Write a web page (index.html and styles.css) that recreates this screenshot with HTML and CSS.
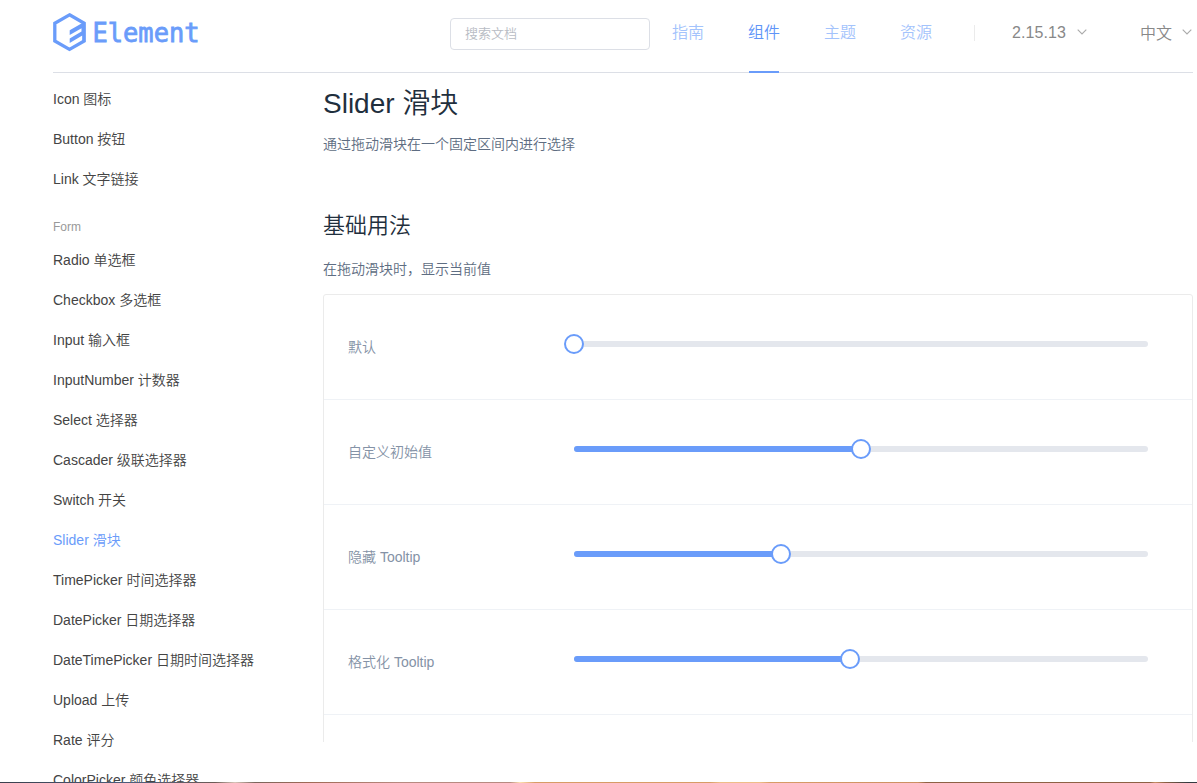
FILE: index.html
```html
<!DOCTYPE html>
<html lang="zh-CN">
<head>
<meta charset="utf-8">
<title>Element - Slider 滑块</title>
<link rel="stylesheet" href="styles.css">
</head>
<body>
<div class="page">
  <header class="header">
    <svg class="logo" width="150" height="40" viewBox="0 0 150 40">
      <path class="logo-hex" d="M16.5 2.8 31.2 11.2V29L16.5 37.4 1.8 29V11.2Z"/>
      <path class="logo-bars" d="M16.7 18.3 31.5 9.8V29L29.3 30.2V23.6L16.7 30.9V26.4L28.5 19.6V16.3L16.7 23.1Z"/>
      <text class="logo-text" x="39.5" y="29.8" textLength="107" lengthAdjust="spacingAndGlyphs">Element</text>
    </svg>
    <input class="search" type="text" placeholder="搜索文档">
    <nav class="nav">
      <a class="nav-item">指南</a>
      <a class="nav-item active">组件</a>
      <a class="nav-item">主题</a>
      <a class="nav-item">资源</a>
    </nav>
    <span class="divider"></span>
    <span class="version">2.15.13</span>
    <svg class="arrow" width="10" height="6" viewBox="0 0 10 6"><path d="M.7.7 5 5 9.3.7"/></svg>
    <span class="lang">中文</span>
    <svg class="arrow" width="10" height="6" viewBox="0 0 10 6"><path d="M.7.7 5 5 9.3.7"/></svg>
  </header>
  <div class="body">
    <aside class="sidebar">
      <a class="link">Icon 图标</a>
      <a class="link">Button 按钮</a>
      <a class="link">Link 文字链接</a>
      <div class="group">Form</div>
      <a class="link">Radio 单选框</a>
      <a class="link">Checkbox 多选框</a>
      <a class="link">Input 输入框</a>
      <a class="link">InputNumber 计数器</a>
      <a class="link">Select 选择器</a>
      <a class="link">Cascader 级联选择器</a>
      <a class="link">Switch 开关</a>
      <a class="link current">Slider 滑块</a>
      <a class="link">TimePicker 时间选择器</a>
      <a class="link">DatePicker 日期选择器</a>
      <a class="link">DateTimePicker 日期时间选择器</a>
      <a class="link">Upload 上传</a>
      <a class="link">Rate 评分</a>
      <a class="link">ColorPicker 颜色选择器</a>
    </aside>
    <main class="content">
      <h1>Slider 滑块</h1>
      <p>通过拖动滑块在一个固定区间内进行选择</p>
      <h2>基础用法</h2>
      <p>在拖动滑块时，显示当前值</p>
      <section class="demo">
        <div class="row"><span class="label">默认</span><div class="track"><div class="bar" style="width:0%"></div><i class="knob"></i></div></div>
        <div class="row"><span class="label">自定义初始值</span><div class="track"><div class="bar" style="width:50%"></div><i class="knob"></i></div></div>
        <div class="row"><span class="label">隐藏 Tooltip</span><div class="track"><div class="bar" style="width:36%"></div><i class="knob"></i></div></div>
        <div class="row"><span class="label">格式化 Tooltip</span><div class="track"><div class="bar" style="width:48%"></div><i class="knob"></i></div></div>
      </section>
    </main>
  </div>
  <div class="strip"></div>
</div>
</body>
</html>
```
FILE: styles.css
```css
* { box-sizing: border-box; }
body {
  margin: 0;
  background: #fff;
  font-family: "Liberation Sans", "Noto Sans CJK SC", sans-serif;
  font-weight: 350;
  font-size: 14px;
}
.page { height: 783px; display: flex; flex-direction: column; overflow: hidden; }
.header {
  flex: none;
  height: 73px;
  margin: 0 4px 0 53px;
  padding-bottom: 8px;
  border-bottom: 1px solid #dcdfe6;
  display: flex;
  align-items: center;
  font-size: 16px;
  color: #888;
}
.logo { flex: none; width: 150px; margin-right: 247px; }
.logo-hex { fill: none; stroke: #6a9cfa; stroke-width: 3.3; }
.logo-bars { fill: #6a9cfa; }
.logo-text { font: 26px "DejaVu Sans Mono", monospace; fill: #6a9cfa; stroke: #6a9cfa; stroke-width: .8; }
.search {
  flex: none;
  width: 200px;
  height: 32px;
  margin: 4px 22px 0 0;
  padding: 0 14px 2px;
  border: 1px solid #dcdfe6;
  border-radius: 4px;
  font: 350 13px/28px "Liberation Sans", "Noto Sans CJK SC", sans-serif;
}
.search::placeholder { color: #b8bcc4; }
.nav { display: flex; gap: 44px; align-self: flex-start; }
.nav-item { height: 73px; width: 32px; line-height: 66px; color: #a3c3fc; }
.nav-item.active { color: #6094f8; background: linear-gradient(#6a9cfa, #6a9cfa) 1px 71px / 30px 2px no-repeat; }
.divider { width: 1px; height: 16px; margin: 1px 37px 0 42px; background: #ebebeb; }
.version { width: 55px; margin-right: 10px; padding-top: 1px; letter-spacing: .1px; }
.lang { margin-left: 53px; margin-right: 10px; width: 32px; margin-top: -1px; }
.arrow { flex: none; fill: none; stroke: #aaa; stroke-width: 1.1; }
.body { display: flex; min-height: 0; height: 709px; }
.sidebar { flex: none; width: 323px; padding: 6px 0 0 53px; overflow: hidden; }
.link { display: block; height: 40px; line-height: 40px; color: #444; white-space: nowrap; }
.link.current { color: #6a9cfa; }
.group { height: 41px; padding-top: 15px; line-height: 26px; font-size: 12px; color: #999; }
.content { width: 870px; height: 669px; overflow: hidden; }
h1, h2 { margin: 0; font-weight: 350; color: #1f2f3d; }
h1 { padding-top: 11px; font-size: 28px; line-height: 40px; }
h2 { margin-top: 56px; font-size: 22px; line-height: 32px; }
p { margin: 0; font-size: 14px; line-height: 20px; color: #5e6d82; }
h1 + p { margin-top: 10px; }
h2 + p { margin-top: 17px; }
.demo { height: 500px; margin-top: 15px; border: 1px solid #ebebeb; border-radius: 3px; }
.row { height: 105px; padding: 0 44px 0 24px; display: flex; align-items: center; border-bottom: 1px solid #eff2f6; }
.label { width: 226px; padding-bottom: 2px; color: #8492a6; }
.track { flex: 1; height: 6px; margin-bottom: 6px; border-radius: 3px; background: #e4e7ed; display: flex; align-items: center; }
.bar { height: 6px; border-radius: 3px 0 0 3px; background: #6a9cfa; }
.knob { flex: none; width: 20px; height: 20px; margin-left: -10px; border: 2px solid #6a9cfa; border-radius: 50%; background: #fff; }
.strip {
  flex: none;
  height: 1px;
  background: linear-gradient(90deg, #3a3f4c 0, #4b5f7d 130px, #6b5a55 215px, #d8c4b8 235px, #7a655c 255px, #a06a55 310px, #b78a80 400px, #b78a80 510px, #ffe0b0 520px, #d89c66 535px, #d89c66 710px, #efbd88 720px, #efbd88 760px, #d89c66 770px, #cc9062 918px, #8d6144 926px, #8d6144 1150px, #c88f64 1155px, #8d6144 1165px, #333a40 1188px);
}
```
